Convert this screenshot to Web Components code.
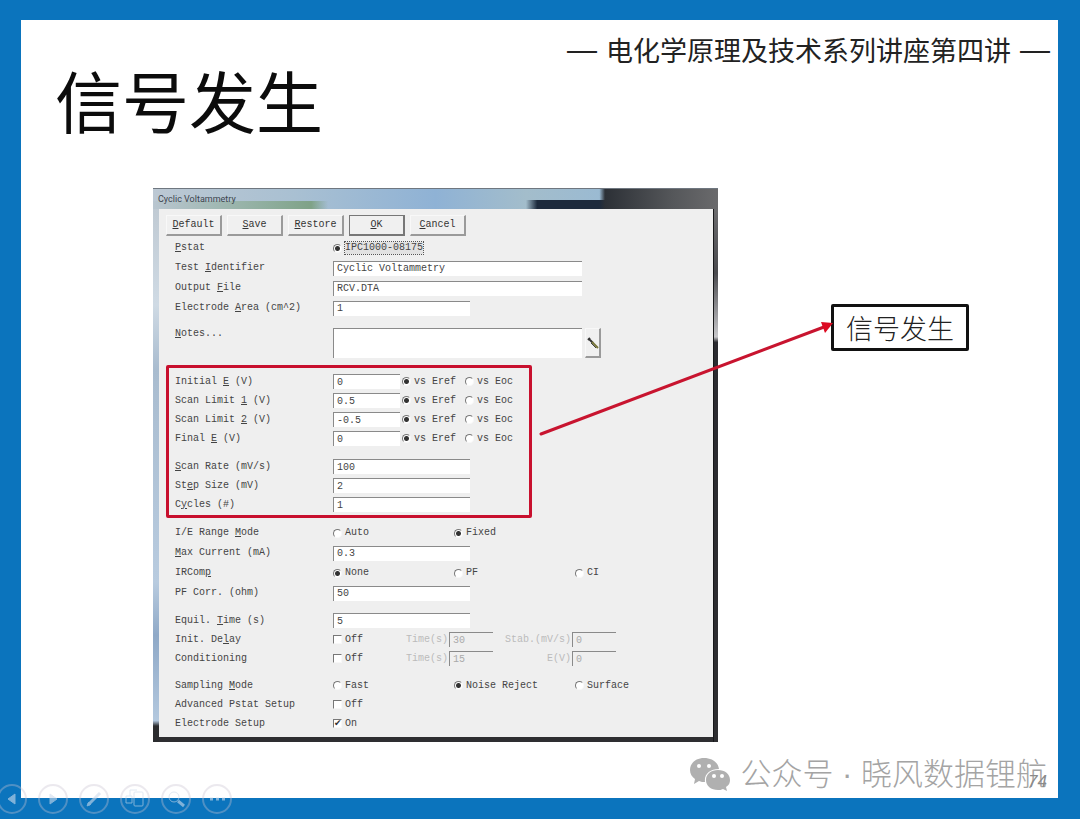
<!DOCTYPE html>
<html lang="zh-CN">
<head>
<meta charset="utf-8">
<title>信号发生</title>
<style>
  body {
    margin: 0;
    font-family: "Noto Sans CJK SC", "Liberation Sans", sans-serif;
    color: #111;
  }
</style>
</head>
<body>
<slide-page>
  <slide-header slot="header" heading="信号发生">电化学原理及技术系列讲座第四讲</slide-header>

  <param-dialog caption="Cyclic Voltammetry">
    <dialog-button slot="toolbar" label="_Default"></dialog-button>
    <dialog-button slot="toolbar" label="_Save"></dialog-button>
    <dialog-button slot="toolbar" label="_Restore"></dialog-button>
    <dialog-button slot="toolbar" label="_OK" primary></dialog-button>
    <dialog-button slot="toolbar" label="_Cancel"></dialog-button>

    <row-group roomy>
      <choice-row label="_Pstat" options="IPC1000-08175" selected="0" focused></choice-row>
      <text-row label="Test _Identifier" value="Cyclic Voltammetry" size="wide"></text-row>
      <text-row label="Output _File" value="RCV.DTA" size="wide"></text-row>
      <text-row label="Electrode _Area (cm^2)" value="1"></text-row>
    </row-group>
    <notes-row label="_Notes..."></notes-row>

    <row-group marked>
      <text-row label="Initial _E (V)" value="0" size="small" options="vs Eref|vs Eoc"></text-row>
      <text-row label="Scan Limit _1 (V)" value="0.5" size="small" options="vs Eref|vs Eoc"></text-row>
      <text-row label="Scan Limit _2 (V)" value="-0.5" size="small" options="vs Eref|vs Eoc"></text-row>
      <text-row label="Final _E (V)" value="0" size="small" options="vs Eref|vs Eoc"></text-row>
      <text-row label="_Scan Rate (mV/s)" value="100" spaced></text-row>
      <text-row label="St_ep Size (mV)" value="2"></text-row>
      <text-row label="C_ycles (#)" value="1"></text-row>
    </row-group>

    <row-group roomy>
      <choice-row label="I/E Range _Mode" options="Auto|Fixed" selected="1"></choice-row>
      <text-row label="_Max Current (mA)" value="0.3"></text-row>
      <choice-row label="IRCom_p" options="None|PF|CI" selected="0"></choice-row>
      <text-row label="PF Corr. (ohm)" value="50"></text-row>
    </row-group>

    <row-group>
      <text-row label="Equil. _Time (s)" value="5" spaced></text-row>
      <toggle-row label="Init. De_lay" text="Off" extras="Time(s)=30|Stab.(mV/s)=0"></toggle-row>
      <toggle-row label="Conditionin_g" text="Off" extras="Time(s)=15|E(V)=0"></toggle-row>
      <choice-row label="Sampling _Mode" options="Fast|Noise Reject|Surface" selected="1" spaced></choice-row>
      <toggle-row label="Advanced Pstat Setup" text="Off"></toggle-row>
      <toggle-row label="Electrode Setup" text="On" checked></toggle-row>
    </row-group>
  </param-dialog>

  <callout-note>信号发生</callout-note>

  <account-mark slot="footer" page="74">公众号 · 晓风数据锂航</account-mark>
  <slide-controls slot="controls"></slide-controls>
</slide-page>

<script>
// "_x" marks the access key of a label
const accel = (text) => text.replace(/_(.)/, "<u>$1</u>");
const plain = (text) => text.replace("_", "");

class SlidePage extends HTMLElement {
  constructor() {
    super();
    this.attachShadow({ mode: "open" }).innerHTML = `
      <style>
        :host {
          display: flex;
          box-sizing: border-box;
          min-height: 100vh;
          padding: 20px 22px 21px 21px;
          position: relative;
          background: #0b74bd;
          overflow: hidden;
        }
        section {
          flex: 1;
          min-width: 0;
          display: flex;
          flex-direction: column;
          background: #fff;
        }
        main {
          display: grid;
          grid-template-columns: minmax(0, 565px) auto;
          column-gap: 113px;
          justify-content: start;
          align-items: start;
          padding-left: 132px;
        }
        footer { margin-top: auto; }
      </style>
      <section>
        <slot name="header"></slot>
        <main><slot></slot></main>
        <footer><slot name="footer"></slot></footer>
      </section>
      <slot name="controls"></slot>
    `;
  }
}

class SlideHeader extends HTMLElement {
  connectedCallback() {
    this.attachShadow({ mode: "open" }).innerHTML = `
      <style>
        :host {
          display: flex;
          justify-content: space-between;
          align-items: flex-start;
          padding: 14px 8px 48px 34px;
        }
        h1 {
          margin: 23px 0 0;
          font-size: 67px;
          line-height: 83px;
          font-weight: 400;
          color: #0c0c0c;
        }
        p {
          display: flex;
          gap: 9px;
          margin: 0;
          font-size: 27px;
          line-height: 32px;
          color: #222;
        }
        i { font-family: "Liberation Sans", sans-serif; font-style: normal; font-size: 30px; }
      </style>
      <h1>${this.getAttribute("heading")}</h1>
      <p><i>—</i><slot></slot><i>—</i></p>
    `;
  }
}

class ParamDialog extends HTMLElement {
  connectedCallback() {
    this.attachShadow({ mode: "open" }).innerHTML = `
      <style>
        :host {
          display: block;
          font: 10px/12px "Liberation Mono", monospace;
          color: #444;
          background: #2e2e31;
        }
        header {
          box-sizing: border-box;
          height: 21px;
          padding: 4px 5px;
          border-top: 1px solid #6f7780;
          font: 9px/12px Roboto, "Liberation Sans", sans-serif;
          color: #3c444c;
          background:
            linear-gradient(90deg, transparent 79%, #2c3036 80%, #55575a 92%, #6a6a6c) ,
            linear-gradient(90deg, transparent 66%, #1d2a3c 68%, #1d2a3c) 0 100% / 100% 45% no-repeat,
            linear-gradient(90deg, #b9c6d0, #8fae9e 20%, #7fa287 28%, transparent 31%) 0 100% / 100% 40% no-repeat,
            linear-gradient(90deg, #bcc8d3, #a9c0d2 25%, #8fb2d5 50%, #a3bdcb 66%, #8db6de);
        }
        .frame {
          padding: 0 5px 5px 6px;
          background:
            linear-gradient(90deg, #17181a 1px, transparent 1px) 100% 0 / 5px 100% no-repeat,
            linear-gradient(#6b6b6d, #4a4a4e 12%, #c8c8cb 24%, #2b2b30 25%, #2e2e31) 100% 0 / 5px 100% no-repeat,
            linear-gradient(#c0cad3, #cfdae4 18%, #a9bccf 30%, #b8cbdf 70%, #8fa9c7 80%, #b3c8de 96%, #2b2c2e 97%) 0 0 / 6px 100% no-repeat;
        }
        form {
          display: flex;
          flex-direction: column;
          padding: 6px 7px 4px;
          background: #efefef;
        }
        nav { display: flex; gap: 5px; padding-bottom: 2px; }
      </style>
      <header>${this.getAttribute("caption")}</header>
      <div class="frame">
        <form>
          <nav><slot name="toolbar"></slot></nav>
          <slot></slot>
        </form>
      </div>
    `;
  }
}

class DialogButton extends HTMLElement {
  connectedCallback() {
    this.attachShadow({ mode: "open" }).innerHTML = `
      <style>
        :host { display: block; }
        button {
          display: block;
          box-sizing: border-box;
          width: 56px;
          height: 21px;
          padding: 0;
          font: inherit;
          color: #333;
          background: #f0f0f0;
          border: solid;
          border-width: 1px 2px 2px 1px;
          border-color: #f8f8f8 #9a9a9a #9a9a9a #f8f8f8;
        }
        :host([primary]) button { border-color: #777; }
      </style>
      <button type="button">${accel(this.getAttribute("label"))}</button>
    `;
  }
}

class RowGroup extends HTMLElement {
  constructor() {
    super();
    this.attachShadow({ mode: "open" }).innerHTML = `
      <style>
        :host {
          --row-height: 19px;
          --row-gap: 8px;
          display: flex;
          flex-direction: column;
          padding-left: 9px;
        }
        :host([roomy]) { --row-height: 20px; }
        :host([roomy]:not(:first-of-type)) { padding-top: 5px; }
        :host([marked]) {
          --row-gap: 9px;
          align-self: flex-start;
          margin-top: 7px;
          padding: 4px 13px 1px 6px;
          border: 3px solid #c8102e;
          border-radius: 2px;
        }
      </style>
      <slot></slot>
    `;
  }
}

const rowStyle = `
  :host {
    display: grid;
    grid-template-columns: 158px 1fr;
    align-items: center;
    min-height: var(--row-height, 19px);
  }
  :host([spaced]) { margin-top: var(--row-gap); }
  input, textarea {
    box-sizing: border-box;
    margin: 0;
    font: inherit;
    color: inherit;
  }
  input[type="text"], textarea {
    display: block;
    width: 137px;
    height: 15px;
    padding: 0 3px;
    border: 0 solid #8a8a8a;
    border-width: 1px 0 0 1px;
    border-radius: 0;
    background: #fff;
    outline: none;
  }
  input[type="radio"], input[type="checkbox"] {
    appearance: none;
    flex: none;
    width: 9px;
    height: 9px;
    border: 1px solid;
    border-color: #777 #f8f8f8 #f8f8f8 #777;
    background: #fff;
  }
  input[type="radio"] { border-radius: 50%; }
  input[type="radio"]:checked { background: radial-gradient(circle, #333 2px, #fff 3px); }
  .option { display: flex; align-items: center; gap: 3px; white-space: nowrap; }
`;

const radios = (options, selected) => options
  .split("|")
  .map((text, i) => `
    <label class="option">
      <input type="radio" name="choice" ${i === selected ? "checked" : ""}><span>${text}</span>
    </label>`)
  .join("");

class TextRow extends HTMLElement {
  connectedCallback() {
    const options = this.getAttribute("options");
    this.attachShadow({ mode: "open" }).innerHTML = `
      <style>
        ${rowStyle}
        :host([size="wide"]) #value { width: 249px; }
        :host([size="small"]) #value { width: 67px; }
        .value { display: grid; grid-template-columns: auto; align-items: center; gap: 2px; }
        :host([options]) .value { grid-template-columns: 67px 61px 51px; }
      </style>
      <label for="value">${accel(this.getAttribute("label"))}</label>
      <div class="value">
        <input id="value" type="text" value="${this.getAttribute("value")}">
        ${options ? radios(options, 0) : ""}
      </div>
    `;
  }
}

class NotesRow extends HTMLElement {
  connectedCallback() {
    this.attachShadow({ mode: "open" }).innerHTML = `
      <style>
        ${rowStyle}
        :host { align-items: start; margin-top: 10px; padding-left: 9px; }
        .value { display: flex; gap: 3px; }
        textarea { width: 249px; height: 30px; resize: none; }
        button {
          width: 16px;
          height: 30px;
          padding: 0;
          border: solid;
          border-width: 1px 2px 2px 1px;
          border-color: #f8f8f8 #9a9a9a #9a9a9a #f8f8f8;
          background: #f0f0f0;
        }
        svg { display: block; }
      </style>
      <label for="notes">${accel(this.getAttribute("label"))}</label>
      <div class="value">
        <textarea id="notes"></textarea>
        <button type="button" aria-label="Edit notes">
          <svg width="13" height="14" viewBox="0 0 13 14" fill="none">
            <path d="M2 4l2-2M3 3l4 4" stroke="#333" stroke-width="2"/>
            <path d="M6 6l6 6" stroke="#77753a" stroke-width="2"/>
            <path d="M5 7l5 5" stroke="#444"/>
          </svg>
        </button>
      </div>
    `;
  }
}

class ChoiceRow extends HTMLElement {
  connectedCallback() {
    const label = this.getAttribute("label");
    this.attachShadow({ mode: "open" }).innerHTML = `
      <style>
        ${rowStyle}
        .value { display: grid; grid-template-columns: repeat(3, 121px); }
        :host([focused]) .option span { outline: 1px dotted #555; background: #e2e2e2; }
      </style>
      <span>${accel(label)}</span>
      <div class="value" role="radiogroup" aria-label="${plain(label)}">
        ${radios(this.getAttribute("options"), Number(this.getAttribute("selected")))}
      </div>
    `;
  }
}

class ToggleRow extends HTMLElement {
  connectedCallback() {
    const label = this.getAttribute("label");
    const extras = (this.getAttribute("extras") || "").split("|").filter(Boolean);
    this.attachShadow({ mode: "open" }).innerHTML = `
      <style>
        ${rowStyle}
        .value { display: grid; grid-template-columns: 36px 80px 44px 79px 44px; align-items: center; }
        input[type="checkbox"]:checked::after {
          content: "✔";
          display: block;
          font: 9px/7px "DejaVu Sans", sans-serif;
          color: #333;
        }
        .extra { color: #bbb; text-align: right; padding-right: 1px; }
        input[type="text"] { width: 44px; background: #efefef; color: #aaa; }
      </style>
      <span>${accel(label)}</span>
      <div class="value">
        <label class="option">
          <input type="checkbox" aria-label="${plain(label)}" ${this.hasAttribute("checked") ? "checked" : ""}>${this.getAttribute("text")}
        </label>
        ${extras.map((extra, i) => {
          const [name, value] = extra.split("=");
          return `<label class="extra" for="extra${i}">${name}</label>
            <input id="extra${i}" type="text" value="${value}" disabled>`;
        }).join("")}
      </div>
    `;
  }
}

class CalloutNote extends HTMLElement {
  constructor() {
    super();
    this.attachShadow({ mode: "open" }).innerHTML = `
      <style>
        :host {
          display: block;
          position: relative;
          margin-top: 116px;
          padding: 0 12px;
          border: 3px solid #111;
          border-radius: 2px;
          font-size: 27px;
          line-height: 41px;
          font-weight: 300;
          color: #222;
          white-space: nowrap;
        }
        /* the pointer reaches back over the dialog */
        svg { position: absolute; right: 100%; top: 12px; }
      </style>
      <slot></slot>
      <svg width="296" height="120" viewBox="0 0 296 120" aria-hidden="true">
        <path d="M3 115L286 8" stroke="#c8142f" stroke-width="3" stroke-linecap="round"/>
        <path d="M295 4L283 3L287 14Z" fill="#dd0a22"/>
      </svg>
    `;
  }
}

class AccountMark extends HTMLElement {
  connectedCallback() {
    this.attachShadow({ mode: "open" }).innerHTML = `
      <style>
        :host {
          display: flex;
          justify-content: flex-end;
          align-items: center;
          gap: 9px;
          position: relative;
          padding: 0 11px 5px 0;
          font-family: "Liberation Sans", "Noto Sans CJK SC", sans-serif;
          font-size: 31px;
          line-height: 36px;
          font-weight: 300;
          color: #a4a4a4;
          white-space: nowrap;
        }
        small {
          position: absolute;
          right: 11px;
          bottom: 6px;
          font: italic 17px/20px "Liberation Sans", sans-serif;
          color: #8a8a8a;
        }
      </style>
      <svg width="42" height="36" viewBox="0 0 42 36" aria-hidden="true">
        <path fill="#b0b0b0" d="M15 1C7 1 1 6 1 13c0 4 2 7 5 9l-1 5 5-3c2 1 4 1 6 1C15 17 21 12 30 12 29 5 23 1 15 1z"/>
        <path fill="#b0b0b0" d="M29 13c-7 0-12 4-12 10s5 10 12 10c2 0 3 0 5-1l4 2-1-4c3-2 4-4 4-7 0-6-5-10-12-10z"/>
        <g fill="#fff">
          <circle cx="10" cy="9" r="2"/><circle cx="20" cy="9" r="2"/>
          <circle cx="25" cy="19" r="2"/><circle cx="33" cy="19" r="2"/>
        </g>
      </svg>
      <span><slot></slot></span>
      <small>${this.getAttribute("page")}</small>
    `;
  }
}

class SlideControls extends HTMLElement {
  constructor() {
    super();
    const icons = {
      "Previous": `<path d="M18 10v10l-7-5z" fill="currentColor"/>`,
      "Next": `<path d="M12 10v10l7-5z" fill="currentColor"/>`,
      "Pen": `<path d="M9 21l12-12" stroke-width="3"/><path d="M8 22l2-4 2 2z" fill="currentColor"/>`,
      "All slides": `<rect x="14" y="8" width="9" height="14" rx="1"/><path d="M17 6h-7v6M6 12h6v7H6z"/>`,
      "Zoom": `<circle cx="13" cy="13" r="5"/><path d="M17 17l6 5" stroke-width="3"/>`,
      "More": `<path d="M8 15h3M14 15h3M20 15h3" stroke-width="3"/>`,
    };
    this.attachShadow({ mode: "open" }).innerHTML = `
      <style>
        :host {
          display: flex;
          gap: 11px;
          position: absolute;
          left: -3px;
          bottom: 5px;
        }
        button {
          width: 30px;
          height: 30px;
          padding: 0;
          border: 0;
          background: none;
          color: #cfdcec;
        }
        svg { display: block; fill: none; stroke: currentColor; opacity: .6; }
      </style>
      ${Object.entries(icons).map(([name, shape]) => `
        <button type="button" aria-label="${name}">
          <svg width="30" height="30" viewBox="0 0 30 30">
            <circle cx="15" cy="15" r="14" stroke="#c9c3d2" stroke-width="2" opacity=".6"/>
            ${shape}
          </svg>
        </button>`).join("")}
    `;
  }
}

customElements.define("slide-page", SlidePage);
customElements.define("slide-header", SlideHeader);
customElements.define("param-dialog", ParamDialog);
customElements.define("dialog-button", DialogButton);
customElements.define("row-group", RowGroup);
customElements.define("text-row", TextRow);
customElements.define("notes-row", NotesRow);
customElements.define("choice-row", ChoiceRow);
customElements.define("toggle-row", ToggleRow);
customElements.define("callout-note", CalloutNote);
customElements.define("account-mark", AccountMark);
customElements.define("slide-controls", SlideControls);
</script>
</body>
</html>
